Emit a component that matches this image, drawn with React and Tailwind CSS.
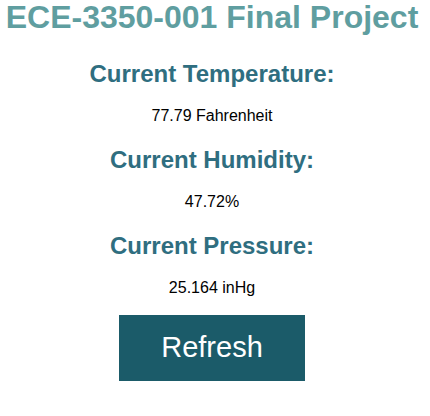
import React, { useState } from 'react';

const readings = {
  temperature: '77.79',
  humidity: '47.72',
  pressure: '25.164',
};

export default function App() {
  const [data, setData] = useState(readings);

  // Refresh just re-sets the last values; there is no sensor in here
  const handleRefresh = () => setData({ ...readings });

  return (
    <div className="min-h-screen bg-white pr-[6px] text-center font-['Liberation_Sans',Arial,sans-serif] text-black">
      <h1 className="-mt-px mb-[24px] text-[32px] font-bold leading-[36.8px] text-[#5f9ea0]">
        ECE-3350-001 Final Project
      </h1>

      <h2 className="my-[20px] text-[24px] font-bold leading-[27.6px] text-[#2f6e80]">Current Temperature:</h2>
      <p className="my-[19px] text-base leading-[18.4px]">{data.temperature} Fahrenheit</p>

      <h2 className="my-[20px] text-[24px] font-bold leading-[27.6px] text-[#2f6e80]">Current Humidity:</h2>
      <p className="my-[19px] text-base leading-[18.4px]">{data.humidity}%</p>

      <h2 className="my-[20px] text-[24px] font-bold leading-[27.6px] text-[#2f6e80]">Current Pressure:</h2>
      <p className="mt-[19px] mb-0 text-base leading-[18.4px]">{data.pressure} inHg</p>

      <button
        onClick={handleRefresh}
        className="mx-auto mt-[17px] flex h-[66px] w-[186px] items-center justify-center bg-[#1b5b69] text-[29px] leading-none text-white"
      >
        Refresh
      </button>
    </div>
  );
}
